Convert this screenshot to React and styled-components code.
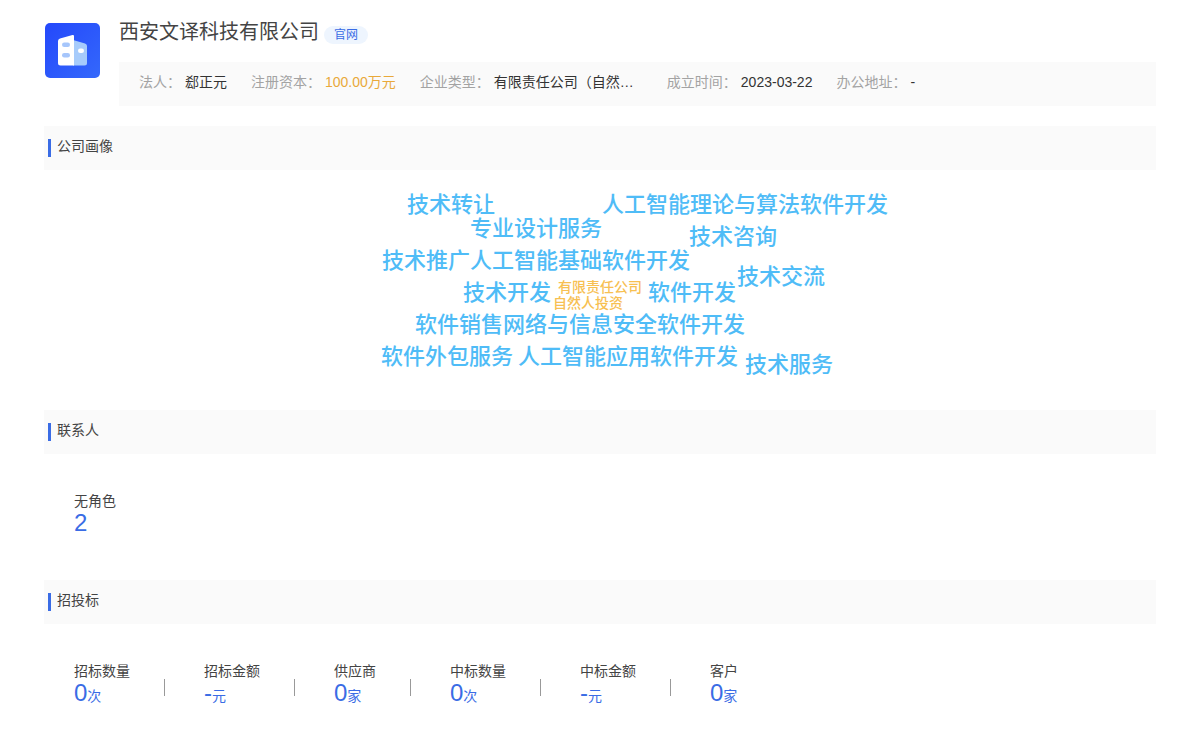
import React from "react";
import styled, { createGlobalStyle } from "styled-components";

const GlobalStyle = createGlobalStyle`
  *, *::before, *::after { box-sizing: border-box; }
  body {
    margin: 0;
    background: #fff;
    color: #444;
    font-family: "Liberation Sans", "Noto Sans CJK SC", sans-serif;
    font-size: 14px;
    line-height: 20px;
  }
  h1, h2, dl, dt, dd { margin: 0; font-weight: 400; }
`;

const Page = styled.main`
  padding: 20px 44px 24px;
`;

const Header = styled.header`
  display: flex;
  gap: 19px;
  padding-bottom: 20px;
`;

const Logo = styled.svg`
  flex: none;
  width: 56px;
  height: 56px;
  margin-top: 2px;
`;

const HeaderBody = styled.div`
  flex: 1;
  min-width: 0;
`;

const TitleRow = styled.div`
  display: flex;
  align-items: flex-start;
  gap: 5px;
  height: 42px;
`;

const Title = styled.h1`
  font-size: 20px;
  line-height: 24px;
`;

const SiteLink = styled.a`
  margin-top: 6px;
  padding: 0 10px;
  border-radius: 9px;
  background: #eef5fe;
  color: #3a6ce5;
  font-size: 12px;
  line-height: 18px;
  text-decoration: none;
`;

const InfoBar = styled.dl`
  display: flex;
  flex-wrap: wrap;
  column-gap: 24px;
  padding: 10px 20px 14px;
  background: #fafafa;
`;

const InfoItem = styled.div`
  display: flex;
  gap: 4px;
`;

const InfoLabel = styled.dt`
  color: #a3a3a3;
  white-space: nowrap;
`;

const InfoValue = styled.dd`
  min-width: ${(p) => (p.$wide ? "149px" : "0")};
  color: ${(p) => (p.$accent ? "#e9a93a" : "#333")};
  white-space: nowrap;
`;

const SectionHead = styled.div`
  display: flex;
  align-items: flex-start;
  gap: 6px;
  height: 44px;
  padding: 10px 4px;
  background: #fafafa;

  &::before {
    content: "";
    width: 3px;
    height: 18px;
    margin-top: 3px;
    background: #3a6ce5;
  }
`;

const SectionTitle = styled.h2`
  font-size: 14px;
  line-height: 20px;
`;

const Cloud = styled.div`
  position: relative;
  width: 600px;
  height: 240px;
  margin: 0 auto;
`;

const Word = styled.span`
  position: absolute;
  left: ${(p) => p.$x}px;
  top: ${(p) => p.$y}px;
  color: ${(p) => (p.$small ? "#f7c052" : "#4fbcf7")};
  font-size: ${(p) => (p.$small ? 14 : 22)}px;
  font-weight: 500;
  line-height: ${(p) => (p.$small ? 16 : 32)}px;
  white-space: nowrap;
`;

const Stats = styled.dl`
  display: flex;
  flex-wrap: wrap;
  padding: 37px 30px 46px;
`;

const Stat = styled.div`
  display: flex;
  flex-direction: column;

  & + & {
    margin-left: 34px;
    padding-left: 40px;
    background: linear-gradient(#999, #999) 0 18px / 1px 17px no-repeat;
  }
`;

const StatLabel = styled.dt`
  line-height: 20px;
`;

const StatValue = styled.dd`
  color: #3a6ce5;
  font-size: 24px;
  line-height: 23px;
`;

const Unit = styled.span`
  font-size: 14px;
`;

const info = [
  { label: "法人：", value: "郄正元" },
  { label: "注册资本：", value: "100.00万元", accent: true },
  { label: "企业类型：", value: "有限责任公司（自然…", wide: true },
  { label: "成立时间：", value: "2023-03-22" },
  { label: "办公地址：", value: "-" },
];

const words = [
  { text: "技术转让", x: 107, y: 19 },
  { text: "人工智能理论与算法软件开发", x: 302, y: 19 },
  { text: "专业设计服务", x: 170, y: 43 },
  { text: "技术咨询", x: 389, y: 51 },
  { text: "技术推广", x: 82, y: 75 },
  { text: "人工智能基础软件开发", x: 170, y: 75 },
  { text: "技术交流", x: 437, y: 91 },
  { text: "技术开发", x: 163, y: 107 },
  { text: "有限责任公司", x: 258, y: 109, small: true },
  { text: "自然人投资", x: 253, y: 125, small: true },
  { text: "软件开发", x: 348, y: 107 },
  { text: "软件销售", x: 115, y: 139 },
  { text: "网络与信息安全软件开发", x: 203, y: 139 },
  { text: "软件外包服务", x: 81, y: 171 },
  { text: "人工智能应用软件开发", x: 218, y: 171 },
  { text: "技术服务", x: 445, y: 179 },
];

const contacts = [{ label: "无角色", value: "2" }];

const bids = [
  { label: "招标数量", value: "0", unit: "次" },
  { label: "招标金额", value: "-", unit: "元" },
  { label: "供应商", value: "0", unit: "家" },
  { label: "中标数量", value: "0", unit: "次" },
  { label: "中标金额", value: "-", unit: "元" },
  { label: "客户", value: "0", unit: "家" },
];

function CompanyLogo() {
  return (
    <Logo viewBox="0 0 56 56" aria-hidden="true">
      <defs>
        <linearGradient id="logo-bg" x1="0" y1="0" x2="1" y2="1">
          <stop offset="0" stopColor="#2448fb" />
          <stop offset="1" stopColor="#3468fb" />
        </linearGradient>
      </defs>
      <rect x="1" y="1" width="55" height="55" rx="5" fill="url(#logo-bg)" />
      <path d="M29 18 L41 21.5 Q43 22.2 43 24 V41 Q43 43.500 40.500 43.500 H29 Z" fill="#a6cbfb" />
      <path d="M16 16.500 Q14 17 14 19 V41 Q14 43.500 16.500 43.500 H30 V14 Q30 12.700 28.500 13 Z" fill="#fff" />
      <rect x="18" y="20.500" width="8" height="4.500" rx="2.200" fill="#a6c6fb" />
      <rect x="18" y="31" width="8" height="4.500" rx="2.200" fill="#a6c6fb" />
      <rect x="34" y="26.500" width="6" height="4.500" rx="2.200" fill="#fff" />
    </Logo>
  );
}

function Section({ title, children }) {
  return (
    <section>
      <SectionHead>
        <SectionTitle>{title}</SectionTitle>
      </SectionHead>
      {children}
    </section>
  );
}

function StatList({ items }) {
  return (
    <Stats>
      {items.map((s) => (
        <Stat key={s.label}>
          <StatLabel>{s.label}</StatLabel>
          <StatValue>
            {s.value}
            {s.unit && <Unit>{s.unit}</Unit>}
          </StatValue>
        </Stat>
      ))}
    </Stats>
  );
}

export default function App() {
  return (
    <>
      <GlobalStyle />
      <Page lang="zh-CN">
        <Header>
          <CompanyLogo />
          <HeaderBody>
            <TitleRow>
              <Title>西安文译科技有限公司</Title>
              <SiteLink href="#">官网</SiteLink>
            </TitleRow>
            <InfoBar>
              {info.map((i) => (
                <InfoItem key={i.label}>
                  <InfoLabel>{i.label}</InfoLabel>
                  <InfoValue $accent={i.accent} $wide={i.wide}>
                    {i.value}
                  </InfoValue>
                </InfoItem>
              ))}
            </InfoBar>
          </HeaderBody>
        </Header>
        <Section title="公司画像">
          <Cloud>
            {words.map((w) => (
              <Word key={w.text} $x={w.x} $y={w.y} $small={w.small}>
                {w.text}
              </Word>
            ))}
          </Cloud>
        </Section>
        <Section title="联系人">
          <StatList items={contacts} />
        </Section>
        <Section title="招投标">
          <StatList items={bids} />
        </Section>
      </Page>
    </>
  );
}
